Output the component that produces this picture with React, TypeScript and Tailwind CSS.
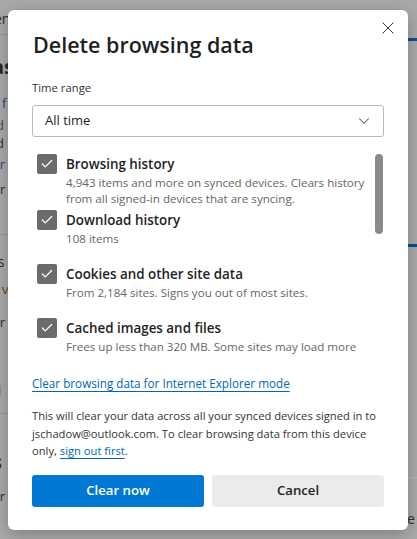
import { X, ChevronDown, Check } from 'lucide-react';

const items = [
  {
    title: 'Browsing history',
    desc: '4,943 items and more on synced devices. Clears history from all signed-in devices that are syncing.',
    gap: 'mb-[3px]',
  },
  { title: 'Download history', desc: '108 items', gap: 'mb-[17px]' },
  { title: 'Cookies and other site data', desc: 'From 2,184 sites. Signs you out of most sites.', gap: 'mb-[17px]' },
  { title: 'Cached images and files', desc: 'Frees up less than 320 MB. Some sites may load more slowly on your next visit.', gap: '' },
];

function Checkbox() {
  return (
    <div className="w-[20px] h-[20px] rounded-[2px] bg-[#6b6b6b] flex items-center justify-center shrink-0">
      <Check className="w-[14px] h-[14px] text-white" strokeWidth={2.2} />
    </div>
  );
}

function Backdrop() {
  return (
    <div className="absolute inset-0 flex justify-between">
      <div className="w-[30px] flex flex-col text-[14px] leading-none text-[#2b2b2b] overflow-hidden">
        <div className="mt-[12px] ml-[-6px] whitespace-nowrap">ent</div>
        <div className="mt-[8px] h-px bg-[#959595] w-full" />
        <div className="mt-[22px] ml-[-8px] text-[20px] font-bold">as</div>
        <div className="mt-[20px] ml-[-6px] text-[13px] text-[#1b4a78]">t f</div>
        <div className="mt-[9px] ml-[-4px] text-[13px] text-[#3f5a2a]">d</div>
        <div className="mt-[5px] ml-[-4px] text-[13px]">d</div>
        <div className="mt-[8px] ml-[-8px] text-[13px] text-[#1b4a78]">or</div>
        <div className="mt-[12px] ml-[-10px] text-[13px]">wr</div>
        <div className="mt-[38px] h-px bg-[#959595] w-full" />
        <div className="mt-[20px] ml-[-8px] text-[14px]">rs</div>
        <div className="mt-[14px] ml-[-6px] text-[13px] text-[#6b3b1a]">t v</div>
        <div className="mt-[20px] ml-[-8px] text-[13px]">or</div>
        <div className="mt-[54px] ml-[-8px] text-[14px] text-[#1b3a5e]">ri</div>
        <div className="mt-[16px] h-px bg-[#959595] w-full" />
        <div className="mt-[38px] ml-[-8px] text-[20px] font-bold">s</div>
        <div className="mt-[18px] ml-[-8px] text-[13px]">or</div>
      </div>
      <div className="w-[10px] flex flex-col">
        <div className="mt-[38px] h-[3px] bg-[#0b4f8a]" />
        <div className="mt-[203px] h-[3px] bg-[#0b4f8a]" />
        <div className="mt-[230px] h-px bg-[#b6b6b6]" />
        <div className="mt-[34px] text-[14px] leading-none text-[#2b2b2b]">e</div>
      </div>
    </div>
  );
}

export default function App() {
  return (
    <div
      className="relative w-[417px] h-[539px] bg-[#a9a9a9] overflow-hidden"
      style={{ fontFamily: '"Open Sans", "Noto Sans", sans-serif' }}
    >
      <Backdrop />
      <div className="absolute left-[8px] top-[10px] w-[400px] h-[520px] bg-white rounded-[6px] shadow-[0_4px_16px_rgba(0,0,0,0.25)] flex flex-col px-[24px] text-[#1f1f1f]">
        <div className="flex justify-between items-start pt-[21px]">
          <h1 className="text-[21.5px] leading-[28px] font-semibold text-[#1f1f1f] ml-[1px]">Delete browsing data</h1>
          <button className="mt-[-17px] mr-[-18px] p-[4px] text-[#333]">
            <X className="w-[20px] h-[20px]" strokeWidth={1.2} />
          </button>
        </div>

        <div className="mt-[20px] text-[11.3px] leading-[18px] text-[#333]">Time range</div>
        <div className="mt-[8px] h-[32px] border border-[#b8b8b8] rounded-[3px] flex items-center justify-between pl-[12px] pr-[10px]">
          <span className="text-[13px] text-[#1f1f1f]">All time</span>
          <ChevronDown className="w-[18px] h-[18px] text-[#555]" strokeWidth={1.4} />
        </div>

        <div className="mt-[17px] h-[203px] flex">
          <div className="flex-1 flex flex-col overflow-hidden pl-[5px]">
            {items.map((it) => (
              <div key={it.title} className={`flex gap-[9px] shrink-0 ${it.gap}`}>
                <Checkbox />
                <div className="flex flex-col">
                  <div className="text-[13.4px] leading-[20px] font-semibold text-[#1f1f1f]">{it.title}</div>
                  <div className="mt-[1px] text-[11.6px] leading-[16px] text-[#666] pr-[6px]">{it.desc}</div>
                </div>
              </div>
            ))}
          </div>
          <div className="w-[8px] flex flex-col mr-[1px]">
            <div className="h-[80px] rounded-full bg-[#8a8a8a]" />
          </div>
        </div>

        <a href="#" className="mt-[17px] text-[11.7px] leading-[18px] text-[#0067b8] underline underline-offset-[3px] self-start">
          Clear browsing data for Internet Explorer mode
        </a>

        <p className="mt-[15px] text-[11.2px] leading-[17.5px] text-[#333]">
          This will clear your data across all your synced devices signed in to jschadow@outlook.com. To clear browsing data from this device only,{' '}
          <a href="#" className="text-[#0067b8] underline underline-offset-[3px]">sign out first</a>.
        </p>

        <div className="mt-[15px] grid grid-cols-2 gap-[8px]">
          <button className="h-[32px] rounded-[3px] bg-[#0078d4] text-white text-[13.2px] font-semibold">Clear now</button>
          <button className="h-[32px] rounded-[3px] bg-[#ebebeb] text-[#1f1f1f] text-[13.2px] font-semibold">Cancel</button>
        </div>
      </div>
    </div>
  );
}
